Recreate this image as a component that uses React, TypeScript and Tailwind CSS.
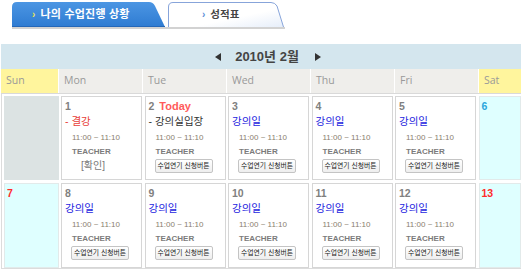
import React from "react";

type Day = {
  n: string;
  kind: "empty" | "weekend" | "day";
  numColor?: string;
  today?: boolean;
  label?: string;
  labelColor?: string;
  confirm?: boolean;
};

const weekdays = ["Sun", "Mon", "Tue", "Wed", "Thu", "Fri", "Sat"];

const week1: Day[] = [
  { n: "", kind: "empty" },
  { n: "1", kind: "day", label: "- 결강", labelColor: "text-[#e8403a]", confirm: true },
  { n: "2", kind: "day", today: true, label: "- 강의실입장", labelColor: "text-[#333333]" },
  { n: "3", kind: "day", label: "강의일", labelColor: "text-[#2424e0]" },
  { n: "4", kind: "day", label: "강의일", labelColor: "text-[#2424e0]" },
  { n: "5", kind: "day", label: "강의일", labelColor: "text-[#2424e0]" },
  { n: "6", kind: "weekend", numColor: "text-[#2aa6dc]" },
];

const week2: Day[] = [
  { n: "7", kind: "weekend", numColor: "text-[#ff2a2a]" },
  { n: "8", kind: "day", label: "강의일", labelColor: "text-[#2424e0]" },
  { n: "9", kind: "day", label: "강의일", labelColor: "text-[#2424e0]" },
  { n: "10", kind: "day", label: "강의일", labelColor: "text-[#2424e0]" },
  { n: "11", kind: "day", label: "강의일", labelColor: "text-[#2424e0]" },
  { n: "12", kind: "day", label: "강의일", labelColor: "text-[#2424e0]" },
  { n: "13", kind: "weekend", numColor: "text-[#ff2a2a]" },
];

function Tabs() {
  return (
    <div className="pl-[12px] pt-[2px]">
      <div className="flex gap-[3px] w-[273px] h-[27px] border-b-2 border-[#d2d2d2]">
        <div className="relative w-[153px] h-[25px]">
          <svg className="absolute inset-0" width="153" height="25" viewBox="0 0 153 25">
            <defs>
              <linearGradient id="t1" x1="0" y1="0" x2="0" y2="1">
                <stop offset="0" stopColor="#4c96e3" />
                <stop offset="1" stopColor="#2e7bd2" />
              </linearGradient>
            </defs>
            <path d="M0 25 L0 5 Q0 0 5 0 L137 0 Q141 0 143 4 L153 25 Z" fill="url(#t1)" />
            <rect x="0" y="24" width="153" height="1" fill="#2467b8" />
          </svg>
          <div className="relative flex items-center h-[25px] pl-[20px] gap-[5px] text-white font-bold text-[11px] tracking-[0.2px]">
            <span className="text-[#e8e35a] text-[10px]">›</span>
            <span>나의 수업진행 상황</span>
          </div>
        </div>
        <div className="relative w-[116px] h-[25px]">
          <svg className="absolute inset-0" width="116" height="25" viewBox="0 0 116 25">
            <defs>
              <linearGradient id="t2" x1="0" y1="0" x2="1" y2="1">
                <stop offset="0" stopColor="#ffffff" />
                <stop offset="0.6" stopColor="#ffffff" />
                <stop offset="1" stopColor="#e6eefa" />
              </linearGradient>
            </defs>
            <path
              d="M0.5 25 L0.5 5 Q0.5 0.5 5 0.5 L103 0.5 Q107 0.5 109 4 L115.5 25"
              fill="url(#t2)"
              stroke="#87a4da"
            />
          </svg>
          <div className="relative flex items-center h-[25px] pl-[34px] gap-[5px] text-[#444] font-bold text-[10.5px]">
            <span className="text-[#5b8fd8] text-[10px]">›</span>
            <span>성적표</span>
          </div>
        </div>
      </div>
    </div>
  );
}

function Cell({ d }: { d: Day }) {
  if (d.kind === "empty") {
    return <div className="bg-[#dce3e3]" />;
  }
  if (d.kind === "weekend") {
    return (
      <div className="bg-[#dfffff] border border-[#e2eaea] pt-[2px] pl-[2px]">
        <div className={`h-[14px] leading-[14px] font-bold text-[10.5px] ${d.numColor}`}>{d.n}</div>
      </div>
    );
  }
  return (
    <div className="bg-white border border-[#d6d6d6] pt-[2px] pl-[3px]">
      <div className="h-[14px] leading-[14px] flex items-center gap-[5px]">
        <span className="font-bold text-[10.5px] text-[#808080]">{d.n}</span>
        {d.today && <span className="font-bold text-[11px] text-[#ff5b5b]">Today</span>}
      </div>
      <div className={`h-[17px] leading-[17px] text-[10.5px] whitespace-nowrap ${d.labelColor}`}>{d.label}</div>
      <div className="h-[15px] leading-[15px] pl-[7px] text-[8px] text-[#8a7e6e]">11:00 ~ 11:10</div>
      <div className="h-[14px] leading-[14px] pl-[7px] text-[8px] font-bold text-[#7b7b7b]">TEACHER</div>
      {d.confirm ? (
        <div className="h-[14px] leading-[14px] pl-[16px] text-[10px] text-[#777]">[확인]</div>
      ) : (
        <div className="ml-[6px] w-[58px] h-[14px] flex items-center justify-center whitespace-nowrap text-[6.8px] text-[#222] bg-gradient-to-b from-white to-[#eeeeee] border border-[#c4c4c4] rounded-[2px]">
          수업연기 신청버튼
        </div>
      )}
    </div>
  );
}

export default function App() {
  return (
    <div className="w-[524px] h-[273px] bg-white overflow-hidden font-['Liberation_Sans','Noto_Sans_CJK_KR',sans-serif]">
      <Tabs />
      <div className="ml-[1px] w-[520px] mt-[15px]">
        <div className="h-[25px] bg-[#d4e6ee] flex items-center justify-center pl-[14px]">
          <svg width="6" height="8" viewBox="0 0 6 8">
            <path d="M6 0 L0 4 L6 8 Z" fill="#333" />
          </svg>
          <span className="ml-[14px] mr-[16px] font-bold text-[13px] text-[#444]">2010년 2월</span>
          <svg width="6" height="8" viewBox="0 0 6 8">
            <path d="M0 0 L6 4 L0 8 Z" fill="#333" />
          </svg>
        </div>
        <div className="grid grid-cols-[57px_repeat(5,84px)_1fr] h-[25px] border-b border-[#d9d9d9] font-['Open_Sans',sans-serif] text-[10.5px] text-[#999]">
          {weekdays.map((w, i) => (
            <div
              key={w}
              className={`flex items-center ${i === 0 ? "pl-[5px]" : "pl-[5px] border-l border-white"} ${
                i === 0 || i === 6 ? "bg-[#fff59d]" : "bg-[#efeeeb]"
              }`}
            >
              {w}
            </div>
          ))}
        </div>
        <div className="grid grid-cols-[54.5px_repeat(5,81px)_1fr] grid-rows-[84px_85px] gap-x-[2.5px] gap-y-[3px] pt-[2px] pl-[2px] border-l border-b border-[#dcdcdc]">
          {[...week1, ...week2].map((d, i) => (
            <Cell key={i} d={d} />
          ))}
        </div>
      </div>
    </div>
  );
}
